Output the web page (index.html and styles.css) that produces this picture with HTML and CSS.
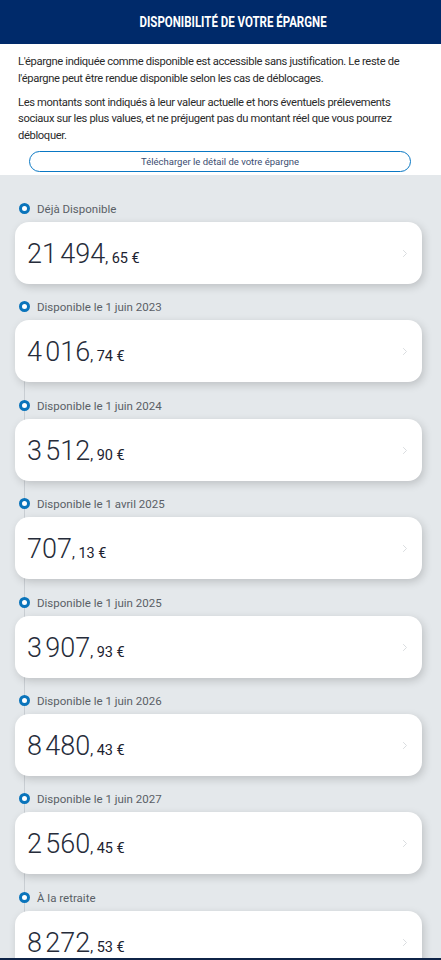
FILE: index.html
```html
<!DOCTYPE html>
<html lang="fr">
<head>
<meta charset="utf-8">
<title>Disponibilité de votre épargne</title>
<link rel="stylesheet" href="styles.css">
</head>
<body>
<header class="topbar">
  <h1 class="title"><span>DISPONIBILITÉ DE VOTRE ÉPARGNE</span></h1>
</header>
<section class="intro">
  <p>L'épargne indiquée comme disponible est accessible sans justification. Le reste de l'épargne peut être rendue disponible selon les cas de déblocages.</p>
  <p>Les montants sont indiqués à leur valeur actuelle et hors éventuels prélevements sociaux sur les plus values, et ne préjugent pas du montant réel que vous pourrez débloquer.</p>
  <button class="dl-btn" type="button">Télécharger le détail de votre épargne</button>
</section>
<main class="timeline">
  <div class="item">
    <div class="label"><span class="dot"></span>Déjà Disponible</div>
    <div class="card"><span class="amt">21&#8239;494</span><span class="cents">, 65 €</span><svg class="chev" viewBox="0 0 8 12"><path d="M1.5 1.5 6 6l-4.5 4.5"/></svg></div>
  </div>
  <div class="item">
    <div class="label"><span class="dot"></span>Disponible le 1 juin 2023</div>
    <div class="card"><span class="amt">4&#8239;016</span><span class="cents">, 74 €</span><svg class="chev" viewBox="0 0 8 12"><path d="M1.5 1.5 6 6l-4.5 4.5"/></svg></div>
  </div>
  <div class="item">
    <div class="label"><span class="dot"></span>Disponible le 1 juin 2024</div>
    <div class="card"><span class="amt">3&#8239;512</span><span class="cents">, 90 €</span><svg class="chev" viewBox="0 0 8 12"><path d="M1.5 1.5 6 6l-4.5 4.5"/></svg></div>
  </div>
  <div class="item">
    <div class="label"><span class="dot"></span>Disponible le 1 avril 2025</div>
    <div class="card"><span class="amt">707</span><span class="cents">, 13 €</span><svg class="chev" viewBox="0 0 8 12"><path d="M1.5 1.5 6 6l-4.5 4.5"/></svg></div>
  </div>
  <div class="item">
    <div class="label"><span class="dot"></span>Disponible le 1 juin 2025</div>
    <div class="card"><span class="amt">3&#8239;907</span><span class="cents">, 93 €</span><svg class="chev" viewBox="0 0 8 12"><path d="M1.5 1.5 6 6l-4.5 4.5"/></svg></div>
  </div>
  <div class="item">
    <div class="label"><span class="dot"></span>Disponible le 1 juin 2026</div>
    <div class="card"><span class="amt">8&#8239;480</span><span class="cents">, 43 €</span><svg class="chev" viewBox="0 0 8 12"><path d="M1.5 1.5 6 6l-4.5 4.5"/></svg></div>
  </div>
  <div class="item">
    <div class="label"><span class="dot"></span>Disponible le 1 juin 2027</div>
    <div class="card"><span class="amt">2&#8239;560</span><span class="cents">, 45 €</span><svg class="chev" viewBox="0 0 8 12"><path d="M1.5 1.5 6 6l-4.5 4.5"/></svg></div>
  </div>
  <div class="item">
    <div class="label"><span class="dot"></span>À la retraite</div>
    <div class="card"><span class="amt">8&#8239;272</span><span class="cents">, 53 €</span><svg class="chev" viewBox="0 0 8 12"><path d="M1.5 1.5 6 6l-4.5 4.5"/></svg></div>
  </div>
</main>
<div class="bottom-bar"></div>
</body>
</html>
```

FILE: styles.css
```css
* { box-sizing: border-box; }
html, body { margin: 0; padding: 0; }
body {
  font-family: Roboto, "Liberation Sans", sans-serif;
  background: #e4e8eb;
  color: #222;
  width: 441px;
  overflow: hidden;
}
.topbar {
  background: #002a6a;
  height: 44px;
  display: flex;
  align-items: center;
  justify-content: center;
  padding-left: 26px;
}
.title {
  margin: 0;
  color: #fff;
  font-size: 14px;
  font-weight: 700;
  line-height: 16px;
}
.title span {
  display: inline-block;
  transform: scaleX(0.82);
  white-space: nowrap;
}
.intro {
  background: #fff;
  padding: 10px 18px 3px 18px;
}
.intro p {
  margin: 0 0 7.5px 0;
  font-size: 11.2px;
  letter-spacing: -0.35px;
  line-height: 16.5px;
  color: #2b2b2b;
}
.intro p + p { margin-bottom: 7px; }
.dl-btn {
  display: block;
  width: 382px;
  height: 21px;
  margin: 0 0 0 11px;
  border: 1px solid #0a78c4;
  border-radius: 11px;
  background: #fff;
  color: #3b4d70;
  font-family: Roboto, "Liberation Sans", sans-serif;
  font-size: 9.5px;
  padding: 0;
}
.timeline {
  position: relative;
  padding: 26px 19px 0 15px;
}
.timeline::before {
  content: "";
  position: absolute;
  left: 24px;
  top: 205px;
  bottom: 0;
  width: 1px;
  background: #c9ced3;
}
.item {
  position: relative;
  margin-bottom: 15.4px;
}
.label {
  display: flex;
  align-items: center;
  height: 16px;
  margin-bottom: 5px;
  padding-left: 22px;
  font-size: 11.5px;
  color: #5a5f66;
  position: relative;
}
.dot {
  position: absolute;
  left: 4px;
  top: 2px;
  width: 11px;
  height: 11px;
  border-radius: 50%;
  border: 3px solid #0a74bb;
  background: #fff;
}
.card {
  position: relative;
  height: 62px;
  background: #fff;
  border-radius: 14px;
  box-shadow: 2px 3px 8px rgba(0, 0, 0, 0.17);
  display: flex;
  align-items: baseline;
  padding: 16px 0 0 12px;
}
.amt {
  font-size: 27px;
  font-weight: 300;
  color: #262c3a;
  line-height: 32px;
}
.cents {
  font-size: 14.5px;
  color: #1c2230;
}
.chev {
  position: absolute;
  right: 14px;
  top: 27px;
  width: 6px;
  height: 9px;
  fill: none;
  stroke: #d9dcdf;
  stroke-width: 1.3;
}
.bottom-bar {
  position: fixed;
  left: 0;
  right: 0;
  bottom: 0;
  height: 2px;
  background: #0f2447;
}
```
